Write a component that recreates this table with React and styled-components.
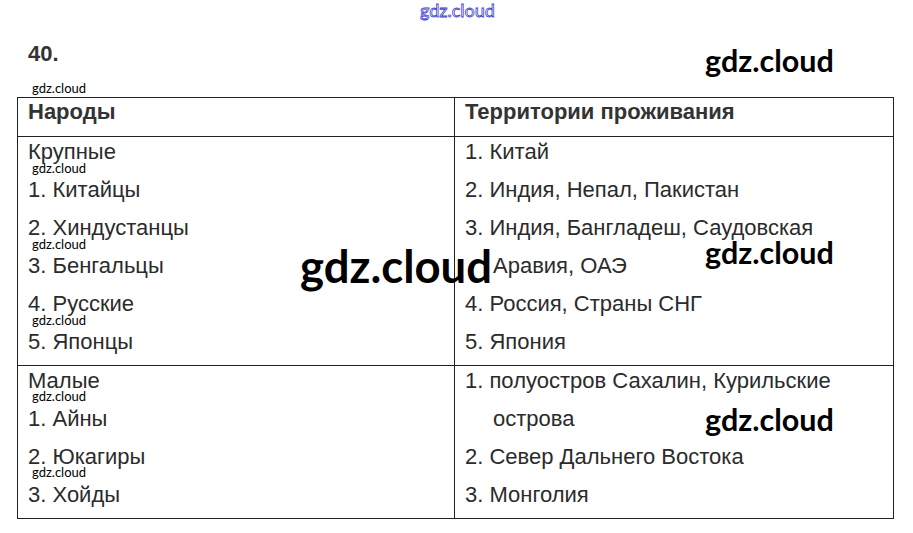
import React from "react";
import styled, {createGlobalStyle} from "styled-components";

const GlobalStyle = createGlobalStyle`
  html, body {
    margin: 0;
    padding: 0;
    background: #fff;
  }
`;

const bigRows = [
    {
        left: ["Крупные", "1. Китайцы", "2. Хиндустанцы", "3. Бенгальцы", "4. Русские", "5. Японцы"],
        right: [
            {text: "1. Китай"},
            {text: "2. Индия, Непал, Пакистан"},
            {text: "3. Индия, Бангладеш, Саудовская"},
            {text: "Аравия, ОАЭ", indent: true},
            {text: "4. Россия, Страны СНГ"},
            {text: "5. Япония"},
        ],
    },
    {
        left: ["Малые", "1. Айны", "2. Юкагиры", "3. Хойды"],
        right: [
            {text: "1. полуостров Сахалин, Курильские"},
            {text: "острова", indent: true},
            {text: "2. Север Дальнего Востока"},
            {text: "3. Монголия"},
        ],
    },
];

// watermarks lying over the page
const smallMarks = [90, 170, 246, 322, 398, 474];
const bigMarks = [
    {x: 705, y: 62, size: 30.5},
    {x: 705, y: 254, size: 30.5},
    {x: 705, y: 421, size: 30.5},
    {x: 300, y: 268, size: 45.5},
];

const App = () => {
    return (
        <Page>
            <GlobalStyle/>
            <TopMark>gdz.cloud</TopMark>
            <Number>40.</Number>

            <Table>
                <HeadCell>Народы</HeadCell>
                <HeadCell $last>Территории проживания</HeadCell>
                {bigRows.map((row, i) => (
                    <React.Fragment key={i}>
                        <Cell>
                            {row.left.map((t) => <Line key={t}>{t}</Line>)}
                        </Cell>
                        <Cell $last>
                            {row.right.map((r) => (
                                <Line key={r.text} $indent={r.indent}>{r.text}</Line>
                            ))}
                        </Cell>
                    </React.Fragment>
                ))}
            </Table>

            {smallMarks.map((y) => (
                <SmallMark key={y} $y={y}>gdz.cloud</SmallMark>
            ))}
            {bigMarks.map((m) => (
                <BigMark key={m.y} $x={m.x} $y={m.y} $size={m.size}>gdz.cloud</BigMark>
            ))}
        </Page>
    );
};
export default App;


const Page = styled.div`
  position: relative;
  width: 913px;
  height: 533px;
  padding: 42px 0 0 17px;
  box-sizing: border-box;
  font-family: "Liberation Sans", Arial, sans-serif;
  color: #2b2b2b;
  overflow: hidden;
`;

const Number = styled.div`
  margin-left: 11px;
  font-size: 22px;
  line-height: 24px;
  font-weight: bold;
  color: #333;
  height: 55px;
`;

const Table = styled.div`
  display: grid;
  grid-template-columns: 437px 1fr;
  width: 877px;
  border: 1px solid #222;
  box-sizing: border-box;
`;

const HeadCell = styled.div`
  height: 38px;
  padding-left: 10px;
  font-size: 22px;
  font-weight: bold;
  line-height: 27px;
  color: #333;
  border-bottom: 1px solid #222;
  border-right: ${(props) => props.$last ? "none" : "1px solid #222"};
`;

const Cell = styled.div`
  padding-left: 10px;
  border-right: ${(props) => props.$last ? "none" : "1px solid #222"};
  border-bottom: 1px solid #222;

  &:nth-last-child(-n+2) {
    border-bottom: none;
  }
`;

const Line = styled.div`
  height: 38px;
  font-size: 22px;
  line-height: 30px;
  white-space: nowrap;
  padding-left: ${(props) => props.$indent ? "28px" : "0"};
`;

const Mark = styled.div`
  position: absolute;
  font-family: Lato, "Open Sans", sans-serif;
  line-height: 1;
  white-space: nowrap;
  color: #000;
`;

const SmallMark = styled(Mark)`
  left: 32px;
  top: ${(props) => props.$y - 8}px;
  font-size: 13px;
`;

const BigMark = styled(Mark)`
  left: ${(props) => props.$x}px;
  top: ${(props) => props.$y - props.$size * 0.55}px;
  font-size: ${(props) => props.$size}px;
  font-weight: bold;
`;

const TopMark = styled(Mark)`
  left: 420px;
  top: 1px;
  font-size: 18px;
  color: transparent;
  -webkit-text-stroke: 0.8px #3b3bd0;
`;
